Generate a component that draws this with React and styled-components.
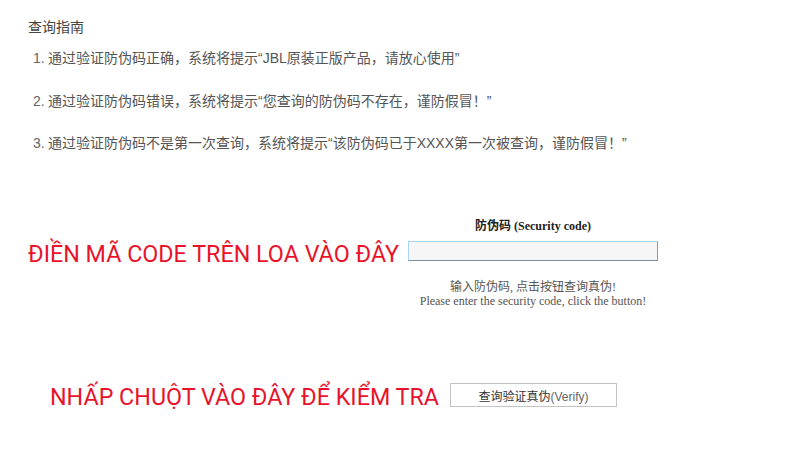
import React from "react";
import styled, { createGlobalStyle } from "styled-components";

const Global = createGlobalStyle`
  html, body { margin: 0; padding: 0; background: #fff; }
  body { font-family: "Liberation Sans", "Noto Sans CJK SC", sans-serif; }
  * { box-sizing: border-box; }
`;

const Page = styled.div`
  width: 790px;
  height: 454px;
  padding-top: 17px;
  overflow: hidden;
`;

const Guide = styled.section`
  padding-left: 28px;
`;

const GuideTitle = styled.h3`
  margin: 0;
  font-size: 14px;
  line-height: 20px;
  font-weight: normal;
  color: #444;
`;

const Steps = styled.ol`
  list-style: none;
  margin: 11px 0 0;
  padding: 0 0 0 5px;
`;

const Step = styled.li`
  display: flex;
  font-size: 14px;
  line-height: 20px;
  color: #555;
  & + & { margin-top: 22.5px; }
`;

const StepNum = styled.span`
  flex: 0 0 15px;
  color: #666;
`;

const FormRow = styled.div`
  display: flex;
  align-items: flex-start;
  margin-top: 63px;
  padding-left: 28px;
`;

const RedLabel = styled.div`
  flex: 0 0 ${(p) => p.$width}px;
  margin-top: ${(p) => p.$offset || 0}px;
  font-family: Roboto, "Liberation Sans", sans-serif;
  font-size: 23.3px;
  line-height: 24px;
  color: #e8132b;
  white-space: nowrap;
`;

const CodeColumn = styled.div`
  width: 250px;
  display: flex;
  flex-direction: column;
  align-items: center;
`;

const CodeLabel = styled.label`
  font-family: "Liberation Serif", "Noto Sans CJK SC", serif;
  font-size: 12px;
  line-height: 20px;
  font-weight: bold;
  color: #222;
`;

const CodeInput = styled.input`
  margin-top: 5px;
  width: 250px;
  height: 20px;
  padding: 0 4px;
  background: #f6f6f6;
  border-style: solid;
  border-width: 1px;
  border-color: #a9d4f4 #8d9ba6 #7f909c #a9d4f4;
  outline: none;
  font-size: 12px;
`;

const Helper = styled.p`
  margin: 19px 0 0;
  text-align: center;
  font-family: "Liberation Serif", "Noto Sans CJK SC", serif;
  color: #555;
`;

const HelperLine = styled.span`
  display: block;
  font-size: 12px;
  line-height: 14px;
  white-space: nowrap;
`;

const VerifyRow = styled.div`
  display: flex;
  align-items: flex-start;
  margin-top: 75px;
  padding-left: 50px;
`;

const VerifyButton = styled.button`
  width: 167px;
  height: 24px;
  padding: 0;
  background: #fff;
  border: 1px solid #c3c3c3;
  font-family: "Liberation Sans", "Noto Sans CJK SC", sans-serif;
  font-size: 12px;
  color: #333;
  cursor: pointer;
`;

const Latin = styled.span`
  color: #666;
`;

export default function App() {
  return (
    <>
      <Global />
      <Page>
        <Guide>
          <GuideTitle>查询指南</GuideTitle>
          <Steps>
            <Step>
              <StepNum>1.</StepNum>
              <span>通过验证防伪码正确，系统将提示“JBL原装正版产品，请放心使用”</span>
            </Step>
            <Step>
              <StepNum>2.</StepNum>
              <span>通过验证防伪码错误，系统将提示“您查询的防伪码不存在，谨防假冒！”</span>
            </Step>
            <Step>
              <StepNum>3.</StepNum>
              <span>通过验证防伪码不是第一次查询，系统将提示“该防伪码已于XXXX第一次被查询，谨防假冒！”</span>
            </Step>
          </Steps>
        </Guide>

        <FormRow>
          <RedLabel $width={380} $offset={26}>ĐIỀN MÃ CODE TRÊN LOA VÀO ĐÂY</RedLabel>
          <CodeColumn>
            <CodeLabel htmlFor="code">防伪码 (Security code)</CodeLabel>
            <CodeInput id="code" type="text" />
            <Helper>
              <HelperLine>输入防伪码, 点击按钮查询真伪!</HelperLine>
              <HelperLine>Please enter the security code, click the button!</HelperLine>
            </Helper>
          </CodeColumn>
        </FormRow>

        <VerifyRow>
          <RedLabel $width={400} $offset={2}>NHẤP CHUỘT VÀO ĐÂY ĐỂ KIỂM TRA</RedLabel>
          <VerifyButton type="button">
            查询验证真伪<Latin>(Verify)</Latin>
          </VerifyButton>
        </VerifyRow>
      </Page>
    </>
  );
}
